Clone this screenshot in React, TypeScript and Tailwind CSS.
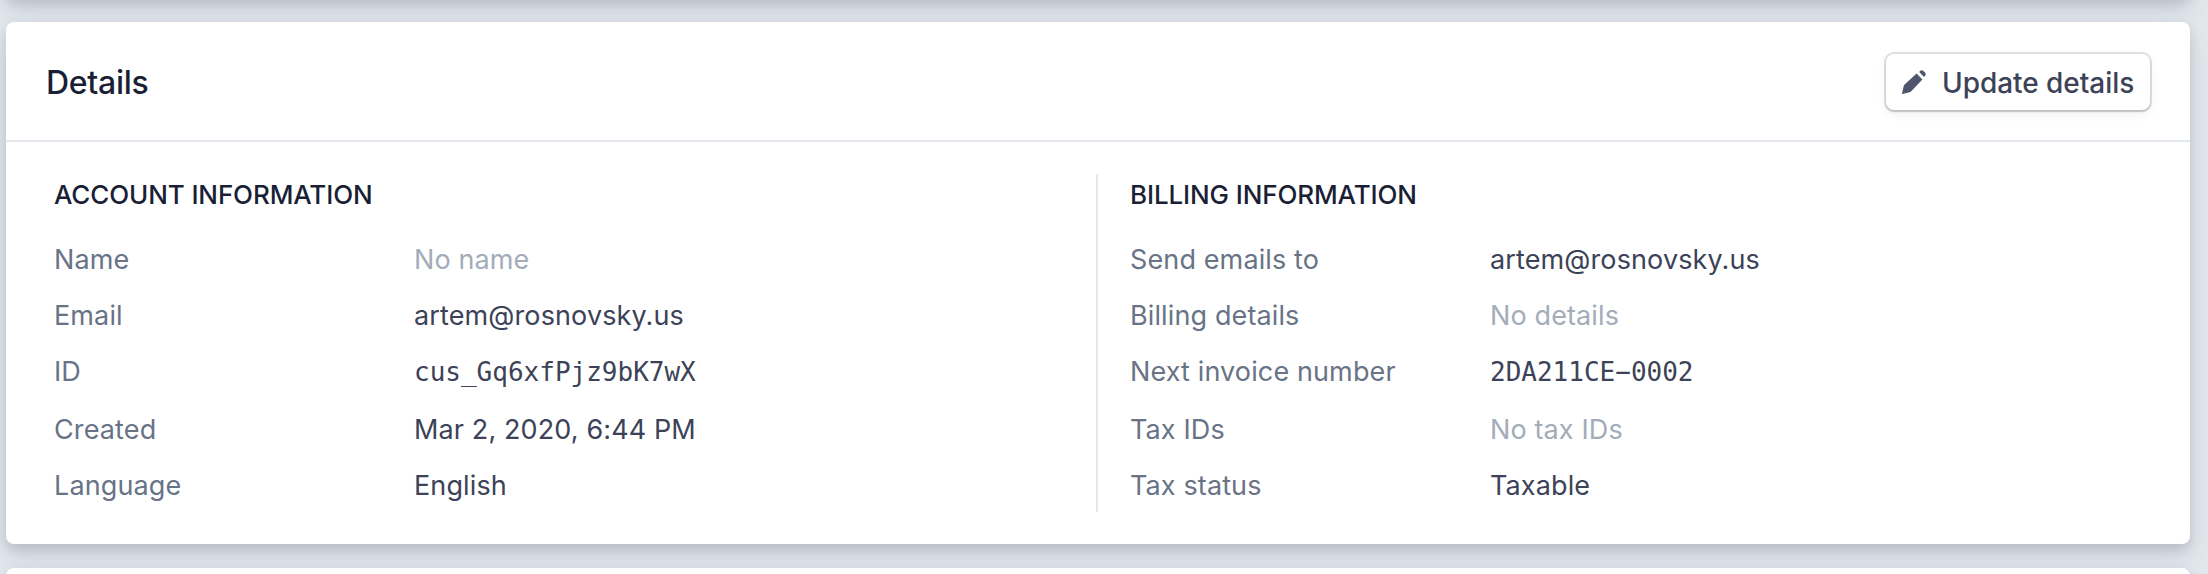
import React from "react";

type Row = { label: string; value: string; kind?: "mono" | "empty" };

const account: Row[] = [
  { label: "Name", value: "No name", kind: "empty" },
  { label: "Email", value: "artem@rosnovsky.us" },
  { label: "ID", value: "cus_Gq6xfPjz9bK7wX", kind: "mono" },
  { label: "Created", value: "Mar 2, 2020, 6:44 PM" },
  { label: "Language", value: "English" },
];

const billing: Row[] = [
  { label: "Send emails to", value: "artem@rosnovsky.us" },
  { label: "Billing details", value: "No details", kind: "empty" },
  { label: "Next invoice number", value: "2DA211CE−0002", kind: "mono" },
  { label: "Tax IDs", value: "No tax IDs", kind: "empty" },
  { label: "Tax status", value: "Taxable" },
];

const cardClass =
  "rounded-lg bg-white shadow-[0_14px_28px_rgba(60,66,87,0.12),0_6px_12px_rgba(0,0,0,0.12)]";

function valueClass(kind?: Row["kind"]) {
  if (kind === "mono")
    return "font-['DejaVu_Sans_Mono',monospace] text-[26px] tracking-[0px] text-[#3c4257]";
  if (kind === "empty") return "text-[#a3acb9]";
  return "text-[#3c4257]";
}

function Section({ title, rows }: { title: string; rows: Row[] }) {
  return (
    <section>
      <h3 className="pt-px text-[26px] leading-10 font-medium tracking-[-0.12px] text-[#1a1f36] uppercase">
        {title}
      </h3>
      <dl className="mt-[17px]">
        {rows.map((row) => (
          <div
            key={row.label}
            className={`flex text-[27px] leading-10 tracking-[0.12px] ${row.kind === "mono" ? "h-[58px]" : "h-14"}`}
          >
            <dt className="w-[360px] pt-2 text-[#697386]">{row.label}</dt>
            <dd className={`pt-2 ${valueClass(row.kind)}`}>{row.value}</dd>
          </div>
        ))}
      </dl>
    </section>
  );
}

export default function App() {
  return (
    <main className="flex h-[574px] flex-col gap-6 overflow-hidden bg-[#e3e8ee] pr-[18px] pl-1.5 font-['Inter',sans-serif]">
      <div className={`-mt-[102px] h-[100px] shrink-0 ${cardClass}`} />
      <div className={`h-[522px] shrink-0 ${cardClass}`}>
        <header className="flex h-[120px] items-center justify-between border-b-2 border-[#e3e8ee] pt-0.5 pr-10 pl-10">
          <h2 className="pt-0.5 text-[32px] font-medium tracking-[-0.3px] text-[#1a1f36]">Details</h2>
          <button className="flex h-14 w-[264px] items-center rounded-lg bg-white pl-4 text-[28px] font-medium tracking-[-0.05px] whitespace-nowrap text-[#3c4257] shadow-[0_0_0_2px_rgba(60,66,87,0.16),0_2px_2px_rgba(0,0,0,0.12),0_4px_10px_rgba(60,66,87,0.08)]">
            <svg viewBox="0 0 24 24" className="mr-4 size-6 fill-[#4f566b]">
              <path d="M0.4 24q-.6 0-.4-.6L1.7 16Q2 15.2 2.6 14.6L14.6 3.6 20.4 9.4 9 21.4q-.6.6-1.4.9z" />
              <path d="M17.2 2l.7-.8q1.8-1.7 3.8.1l1 1q1.8 2 .2 3.8l-.8.8z" />
            </svg>
            <span className="pt-0.5">Update details</span>
          </button>
        </header>
        <div className="flex pt-8 pl-12">
          <div className="h-[338px] w-[1044px] border-r-2 border-[#e3e8ee]">
            <Section title="Account information" rows={account} />
          </div>
          <div className="pl-8">
            <Section title="Billing information" rows={billing} />
          </div>
        </div>
      </div>
      <div className={`h-[100px] shrink-0 ${cardClass}`} />
    </main>
  );
}
